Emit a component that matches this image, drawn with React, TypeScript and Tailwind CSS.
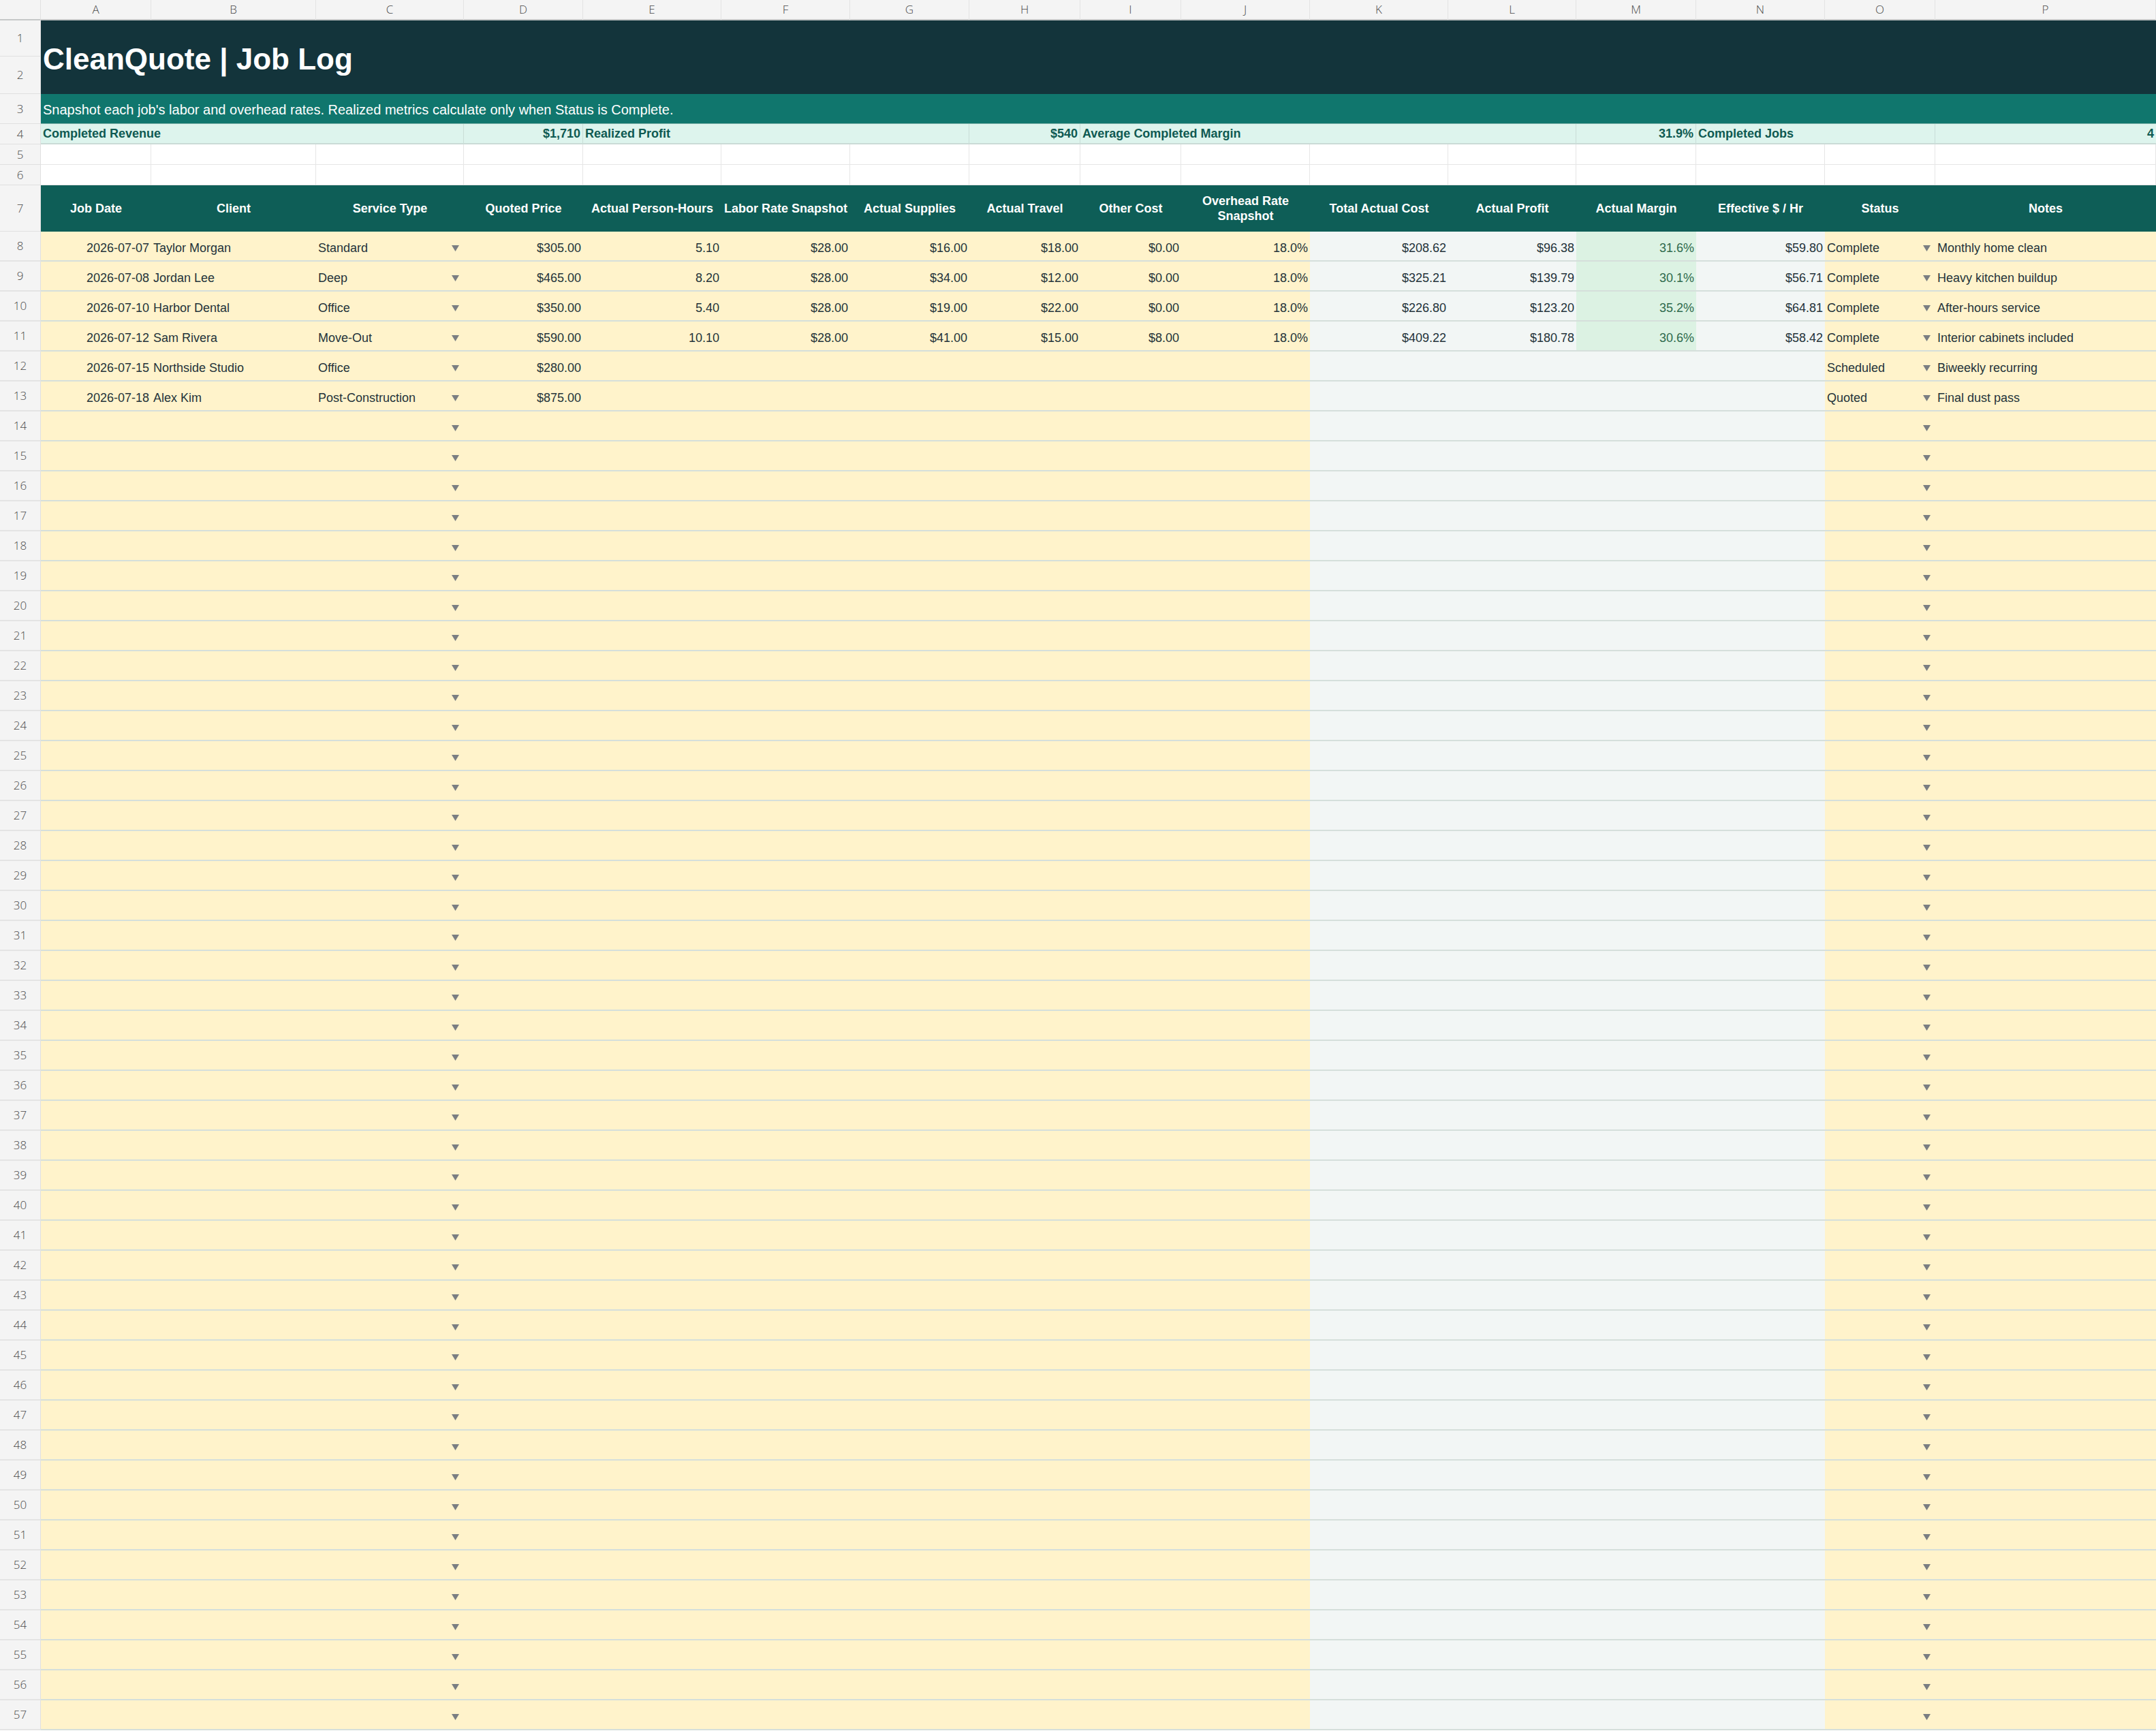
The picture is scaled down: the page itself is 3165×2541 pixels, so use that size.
import React from 'react';

const LETTERS = ['A', 'B', 'C', 'D', 'E', 'F', 'G', 'H', 'I', 'J', 'K', 'L', 'M', 'N', 'O', 'P'];

const HEADERS = [
  'Job Date',
  'Client',
  'Service Type',
  'Quoted Price',
  'Actual Person-Hours',
  'Labor Rate Snapshot',
  'Actual Supplies',
  'Actual Travel',
  'Other Cost',
  'Overhead Rate Snapshot',
  'Total Actual Cost',
  'Actual Profit',
  'Actual Margin',
  'Effective $ / Hr',
  'Status',
  'Notes',
];

type Job = string[];

// A..P per row
const JOBS: Job[] = [
  ['2026-07-07', 'Taylor Morgan', 'Standard', '$305.00', '5.10', '$28.00', '$16.00', '$18.00', '$0.00', '18.0%', '$208.62', '$96.38', '31.6%', '$59.80', 'Complete', 'Monthly home clean'],
  ['2026-07-08', 'Jordan Lee', 'Deep', '$465.00', '8.20', '$28.00', '$34.00', '$12.00', '$0.00', '18.0%', '$325.21', '$139.79', '30.1%', '$56.71', 'Complete', 'Heavy kitchen buildup'],
  ['2026-07-10', 'Harbor Dental', 'Office', '$350.00', '5.40', '$28.00', '$19.00', '$22.00', '$0.00', '18.0%', '$226.80', '$123.20', '35.2%', '$64.81', 'Complete', 'After-hours service'],
  ['2026-07-12', 'Sam Rivera', 'Move-Out', '$590.00', '10.10', '$28.00', '$41.00', '$15.00', '$8.00', '18.0%', '$409.22', '$180.78', '30.6%', '$58.42', 'Complete', 'Interior cabinets included'],
  ['2026-07-15', 'Northside Studio', 'Office', '$280.00', '', '', '', '', '', '', '', '', '', '', 'Scheduled', 'Biweekly recurring'],
  ['2026-07-18', 'Alex Kim', 'Post-Construction', '$875.00', '', '', '', '', '', '', '', '', '', '', 'Quoted', 'Final dust pass'],
];

const EMPTY_ROWS = Array.from({ length: 44 }, () => Array(16).fill(''));

const LEFT_COLS = [1, 2, 14, 15];
const CALC_COLS = [10, 11, 13];

function Caret() {
  return (
    <svg width="11" height="9" viewBox="0 0 11 9" className="shrink-0">
      <path d="M0 0 H11 L5.5 9 Z" fill="#7a7e82" />
    </svg>
  );
}

function RowHead({ n, className = '' }: { n: number; className?: string }) {
  return (
    <div
      className={`flex items-center justify-center bg-[#f4f4f4] border-r border-r-[#e0e0e0] text-[17px] text-[#4a4a4a] font-['Open_Sans',sans-serif] font-light ${className}`}
    >
      {n}
    </div>
  );
}

function DataCell({ col, value, done }: { col: number; value: string; done: boolean }) {
  let bg = 'bg-[#fff3cb]';
  if (CALC_COLS.includes(col)) bg = 'bg-[#f2f6f5]';
  if (col === 12) bg = done ? 'bg-[#dcf2e3]' : 'bg-[#f2f6f5]';
  const color = col === 12 ? 'text-[#2f6a4d]' : 'text-[#24333a]';
  const hasCaret = col === 2 || col === 14;
  const align = LEFT_COLS.includes(col) ? 'justify-start' : 'justify-end';

  return (
    <div
      className={`flex items-center ${hasCaret ? 'justify-between' : align} ${bg} ${color} border-b-2 border-b-[#d5dfdb] pt-[6px] pl-[3px] ${hasCaret ? 'pr-[7px]' : 'pr-[3px]'} text-[18px] whitespace-nowrap overflow-hidden`}
    >
      <span>{value}</span>
      {hasCaret && <Caret />}
    </div>
  );
}

export default function App() {
  const rows = [...JOBS, ...EMPTY_ROWS];

  return (
    <div className="w-[3165px] h-[2541px] overflow-hidden bg-white font-['Liberation_Sans',Arial,sans-serif]">
      <div className="grid grid-cols-[60px_162px_242px_217px_175px_203px_189px_175px_163px_148px_189px_203px_188px_176px_189px_162px_324px] grid-rows-[30px_53px_55px_44px_30px_30px_30px_68px_repeat(50,44px)]">
        {/* column letters */}
        <div className="bg-[#f4f4f4] border-r border-r-[#e0e0e0] border-b-2 border-b-[#c6c8c8]" />
        {LETTERS.map(l => (
          <div
            key={l}
            className="flex items-center justify-center bg-[#f4f4f4] border-r border-r-[#e3e3e3] border-b-2 border-b-[#c6c8c8] text-[17px] text-[#4a4a4a] font-['Open_Sans',sans-serif] font-light"
          >
            {l}
          </div>
        ))}

        {/* title */}
        <RowHead n={1} className="border-b border-b-[#e0e0e0]" />
        <div className="col-span-16 row-span-2 flex items-center bg-[#13343b] pl-[3px] pt-[6px]">
          <span className="text-[44px] font-bold text-white">CleanQuote | Job Log</span>
        </div>
        <RowHead n={2} className="border-b border-b-[#e0e0e0]" />

        {/* subtitle */}
        <RowHead n={3} className="border-b border-b-[#e0e0e0]" />
        <div className="col-span-16 flex items-center bg-[#10766d] border-b border-b-[#7fb3aa] pl-[3px] pt-[3px] text-[20px] text-white">
          Snapshot each job's labor and overhead rates. Realized metrics calculate only when Status is Complete.
        </div>

        {/* summary */}
        <RowHead n={4} className="border-b border-b-[#e0e0e0]" />
        <div className="col-span-3 flex items-center bg-[#ddf4ed] border-b-2 border-b-[#cadbd6] border-r border-r-[#c9ddd7] pl-[3px] text-[18px] font-bold text-[#0f5a52]">
          Completed Revenue
        </div>
        <div className="flex items-center justify-end bg-[#ddf4ed] border-b-2 border-b-[#cadbd6] border-r border-r-[#c9ddd7] pr-[3px] text-[18px] font-bold text-[#0f5a52]">
          $1,710
        </div>
        <div className="col-span-3 flex items-center bg-[#ddf4ed] border-b-2 border-b-[#cadbd6] border-r border-r-[#c9ddd7] pl-[3px] text-[18px] font-bold text-[#0f5a52]">
          Realized Profit
        </div>
        <div className="flex items-center justify-end bg-[#ddf4ed] border-b-2 border-b-[#cadbd6] border-r border-r-[#c9ddd7] pr-[3px] text-[18px] font-bold text-[#0f5a52]">
          $540
        </div>
        <div className="col-span-4 flex items-center bg-[#ddf4ed] border-b-2 border-b-[#cadbd6] border-r border-r-[#c9ddd7] pl-[3px] text-[18px] font-bold text-[#0f5a52]">
          Average Completed Margin
        </div>
        <div className="flex items-center justify-end bg-[#ddf4ed] border-b-2 border-b-[#cadbd6] border-r border-r-[#c9ddd7] pr-[3px] text-[18px] font-bold text-[#0f5a52]">
          31.9%
        </div>
        <div className="col-span-2 flex items-center bg-[#ddf4ed] border-b-2 border-b-[#cadbd6] border-r border-r-[#c9ddd7] pl-[3px] text-[18px] font-bold text-[#0f5a52]">
          Completed Jobs
        </div>
        <div className="flex items-center justify-end bg-[#ddf4ed] border-b-2 border-b-[#cadbd6] pr-[3px] text-[18px] font-bold text-[#0f5a52]">
          4
        </div>

        {/* blank rows 5-6 */}
        {[5, 6].map(n => (
          <React.Fragment key={n}>
            <RowHead n={n} className="border-b border-b-[#e0e0e0]" />
            {LETTERS.map(l => (
              <div key={l} className="bg-white border-r border-r-[#e6e6e6] border-b border-b-[#e6e6e6]" />
            ))}
          </React.Fragment>
        ))}

        {/* table header */}
        <RowHead n={7} className="border-b border-b-[#e0e0e0]" />
        {HEADERS.map(h => (
          <div
            key={h}
            className="flex items-center justify-center bg-[#0e5e57] px-[3px] text-center text-[18px] leading-[22px] font-bold text-white"
          >
            {h === 'Overhead Rate Snapshot' ? (
              <span>
                Overhead Rate
                <br />
                Snapshot
              </span>
            ) : (
              h
            )}
          </div>
        ))}

        {/* data */}
        {rows.map((r, i) => {
          const done = r[14] === 'Complete';
          return (
            <React.Fragment key={i}>
              <RowHead n={i + 8} className="border-b-2 border-b-[#e4e4e4]" />
              {r.map((v, c) => (
                <DataCell key={c} col={c} value={v} done={done} />
              ))}
            </React.Fragment>
          );
        })}
      </div>
    </div>
  );
}
